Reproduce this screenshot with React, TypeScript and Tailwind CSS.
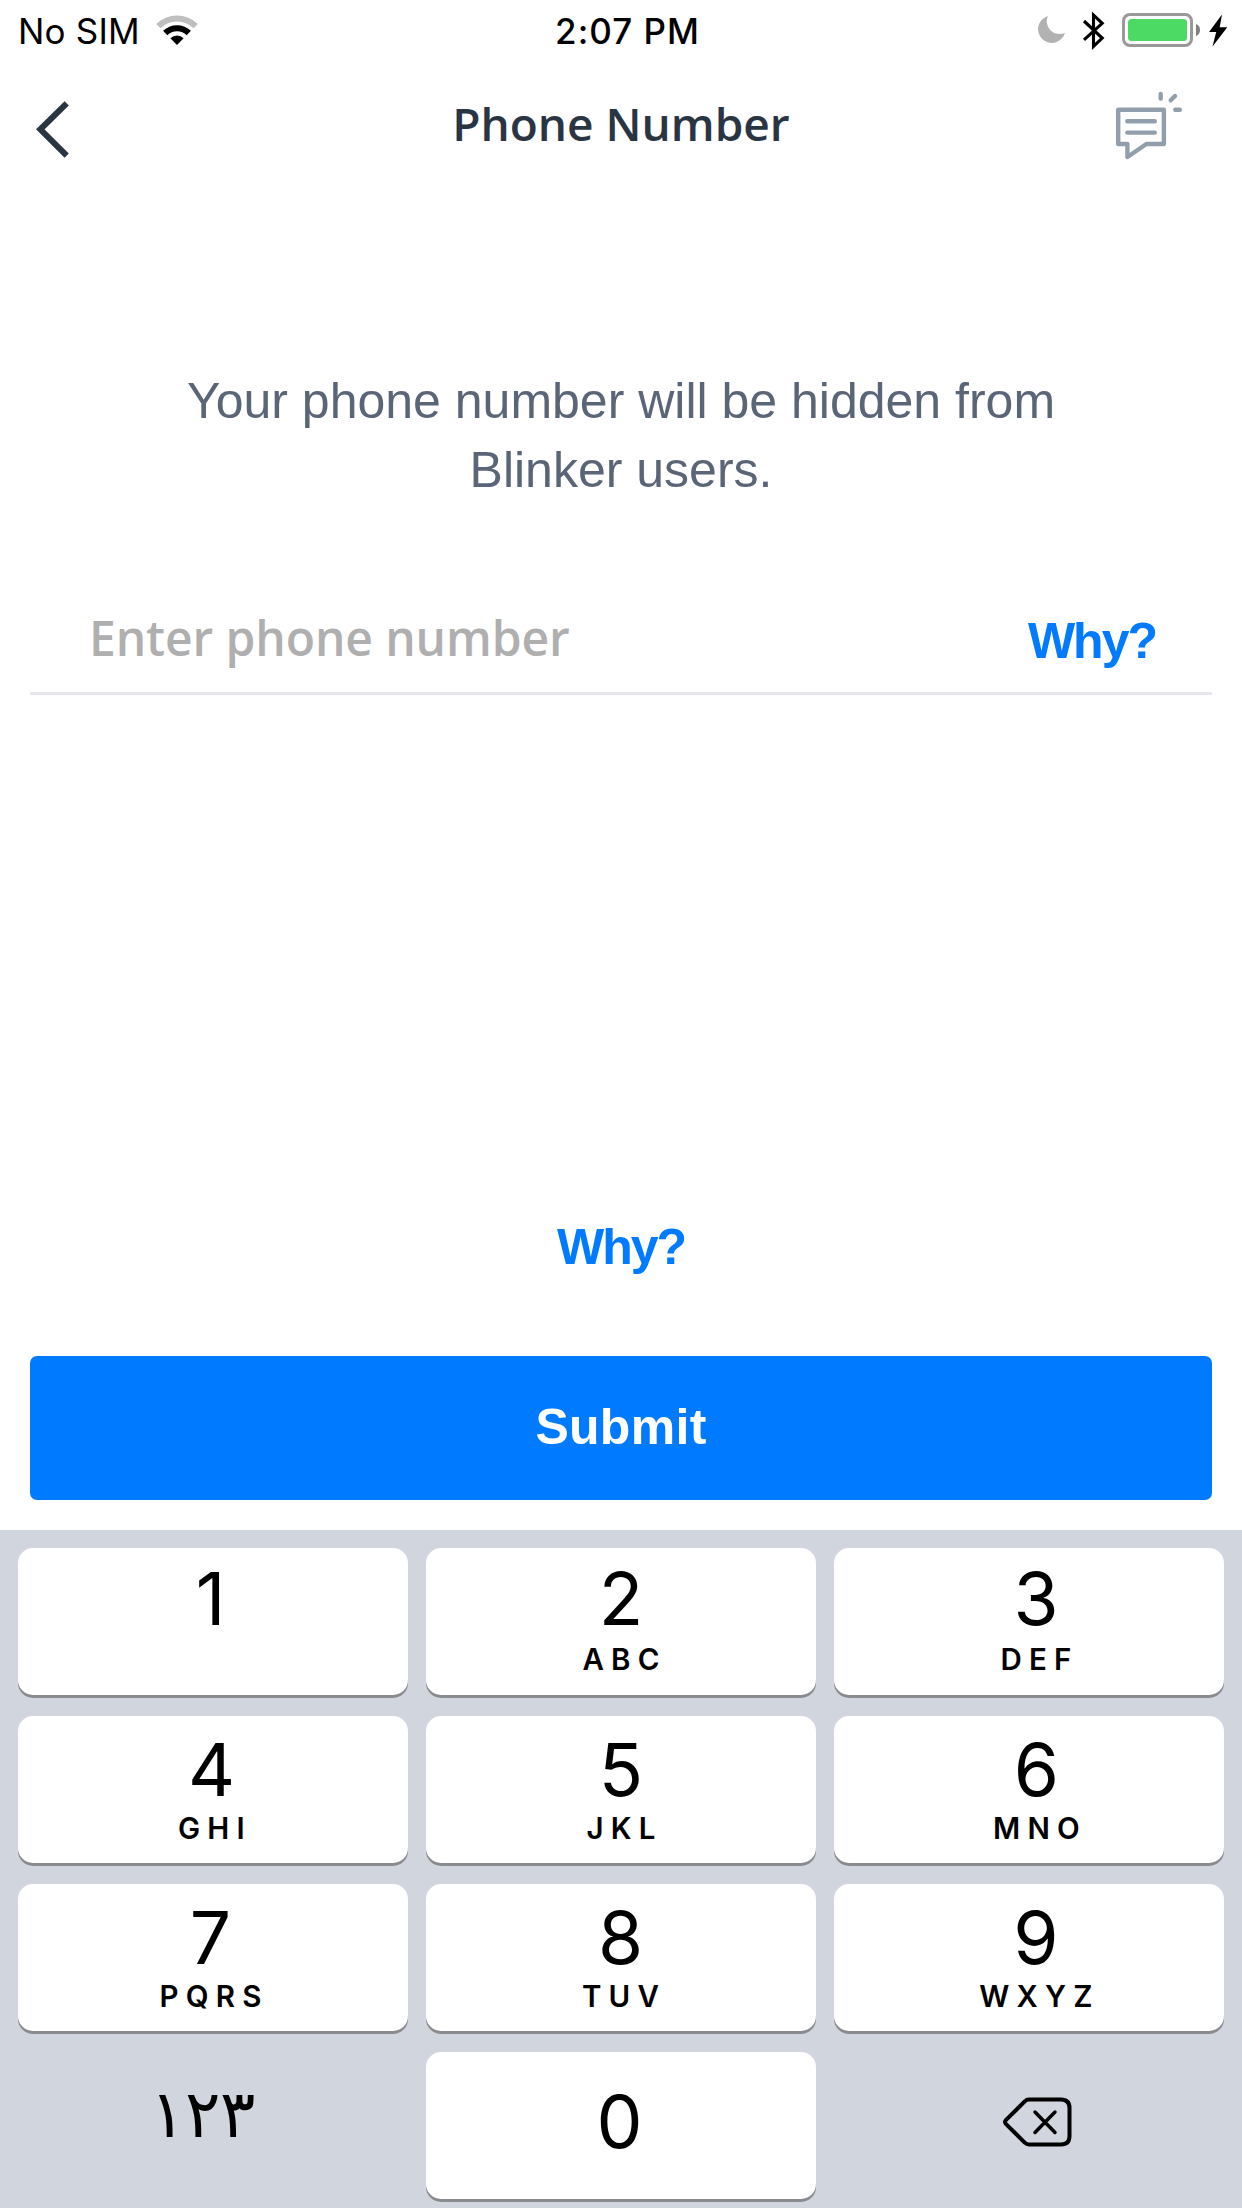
import React from "react";

const KEYS: { digit: string; letters: string; top: string; nudge: string }[] = [
  { digit: "1", letters: "", top: "pt-[11px]", nudge: "pr-[5px]" },
  { digit: "2", letters: "ABC", top: "pt-[11px] gap-[2px]", nudge: "" },
  { digit: "3", letters: "DEF", top: "pt-[11px] gap-[2px]", nudge: "pl-[14px]" },
  { digit: "4", letters: "GHI", top: "pt-[14px]", nudge: "pr-[3px]" },
  { digit: "5", letters: "JKL", top: "pt-[14px]", nudge: "" },
  { digit: "6", letters: "MNO", top: "pt-[14px]", nudge: "pl-[15px]" },
  { digit: "7", letters: "PQRS", top: "pt-[14px]", nudge: "pr-[5px]" },
  { digit: "8", letters: "TUV", top: "pt-[14px]", nudge: "pr-[1px]" },
  { digit: "9", letters: "WXYZ", top: "pt-[14px]", nudge: "pl-[14px]" },
];

const KEY = "h-[147px] rounded-[15px] bg-white shadow-[0_3px_0_#8a8b8f]";

function StatusBar() {
  return (
    <div className="grid h-[60px] grid-cols-3 items-start font-['Inter',sans-serif] text-[35px] leading-[40px] text-black">
      <div className="flex pl-[18px] pt-[11px]">
        <span className="w-[138px] whitespace-nowrap tracking-[0.2px]">No SIM</span>
        <svg className="mt-[4px] h-[31px] w-[42px]" viewBox="0 0 42 31">
          <path d="M2.3 11.2a26.500 26.500 0 0 1 37.400 0" fill="none" stroke="#bfbfbf" strokeWidth="6" />
          <path d="M9.200 18a16.800 16.800 0 0 1 23.600 0" fill="none" stroke="#000" strokeWidth="6" />
          <path d="M21 30l-6.600-6.700a9.400 9.400 0 0 1 13.200 0z" fill="#000" />
        </svg>
      </div>
      <div className="pt-[11px] pl-[13px] text-center font-medium tracking-[1px] whitespace-nowrap">2:07 PM</div>
      <div className="flex justify-end pr-[14px] pt-[11px]">
        <svg className="h-[39px] w-[192px]" viewBox="1036 11 192 39">
          <path d="M1048 16A12.600 12.600 0 0 0 1065 32.700A13.700 13.700 0 1 1 1048 16z" fill="#b2b2b2" />
          <path d="M1084 21l18.200 17-8.700 8.300V15l8.700 8.300L1084 39.800" fill="none" stroke="#000" strokeWidth="3.100" />
          <rect x="1123.500" y="14.500" width="68" height="31" rx="6.500" fill="none" stroke="#999" strokeWidth="3" />
          <rect x="1128" y="19" width="59" height="22" rx="3.500" fill="#4cd964" />
          <path d="M1196 24q4 1.500 4 6t-4 6z" fill="#808080" />
          <path d="M1222 14.500l-13 17.500h7.200l-3.700 14.500 14.800-19.300h-7.600z" fill="#000" />
        </svg>
      </div>
    </div>
  );
}

function Header() {
  return (
    <header className="flex h-[120px] justify-between">
      <button className="ml-[34px] mt-[40px] h-[60px] w-[40px]" aria-label="Back">
        <svg className="h-[60px] w-[40px]" viewBox="34 100 40 60">
          <path d="M66.700 103.300L40.300 129.300l26.400 26.400" fill="none" stroke="#2a3544" strokeWidth="6" />
        </svg>
      </button>
      <h1 className="ml-[56px] mt-[33px] font-['Open_Sans',sans-serif] text-[46px] leading-[60px] font-semibold whitespace-nowrap text-[#2a3544]">
        Phone Number
      </h1>
      <button className="mr-[58px] mt-[28px] h-[72px] w-[72px]" aria-label="Messages">
        <svg className="h-[72px] w-[72px]" viewBox="1112 88 72 72" fill="none" stroke="#919fac" strokeWidth="4.400" strokeLinecap="round" strokeLinejoin="round">
          <path d="M1118.200 109.700h45.700v34.300h-17.500l-19 13v-13h-9.200z" />
          <path d="M1127.300 121.300h27.500M1127.300 132.600h27.500M1160.700 94v4.500M1170.700 100.300l4.300-4.300M1175.300 109.800h4.500" />
        </svg>
      </button>
    </header>
  );
}

export default function App() {
  return (
    <div className="flex h-[2208px] w-[1242px] flex-col overflow-hidden bg-white font-['Liberation_Sans',Arial,sans-serif]">
      <StatusBar />
      <Header />

      <main className="flex h-[1350px] flex-col px-[30px]">
        <p className="mt-[187px] text-center text-[50px] leading-[69px] text-[#5a6678]">
          Your phone number will be hidden from
          <br />
          Blinker users.
        </p>

        <div className="mt-[83px] flex h-[107px] justify-between border-b-[3px] border-[#e6e7ec] pl-[59px] pr-[56px]">
          <span className="mt-[20px] font-['Open_Sans',sans-serif] text-[48px] leading-[60px] font-semibold tracking-[-0.1px] whitespace-nowrap text-[#afafaf]">
            Enter phone number
          </span>
          <button className="mt-[23px] h-[60px] text-[50px] leading-[60px] font-bold tracking-[-2px] text-[#007aff]">Why?</button>
        </div>

        <button className="mt-[522px] self-center text-[50px] leading-[60px] font-bold tracking-[-2px] text-[#007aff]">Why?</button>

        <button className="mt-[79px] h-[144px] rounded-[7px] bg-[#007aff] pb-[2px] text-[50px] leading-[60px] font-bold tracking-[0.3px] text-white">Submit</button>
      </main>

      <section className="grid h-[678px] grid-cols-3 content-start gap-x-[18px] gap-y-[21px] bg-[#d1d5dd] px-[18px] pt-[18px] font-['Inter',sans-serif] text-black">
        {KEYS.map((k) => (
          <button key={k.digit} className={KEY + " flex flex-col items-center " + k.top + " " + k.nudge}>
            <span className="h-[80px] text-[73px] leading-[80px]">{k.digit}</span>
            {k.letters && (
              <span className="h-[36px] pl-[7px] text-[29.500px] leading-[36px] font-semibold tracking-[7.200px]">{k.letters}</span>
            )}
          </button>
        ))}
        <button className="h-[147px] pr-[22px] pb-[22px] font-['DejaVu_Serif',serif] text-[66px] leading-[80px]" aria-label="Arabic digits">
          <bdo dir="ltr">١٢٣</bdo>
        </button>
        <button className={KEY + " pr-[3px] pb-[7px] text-[73px] leading-[80px]"}>0</button>
        <button className="flex h-[147px] items-center justify-center pl-[16px] pb-[7px]" aria-label="Delete">
          <svg className="h-[52px] w-[70px]" viewBox="0 0 70 52" fill="none" stroke="#000" strokeWidth="4" strokeLinecap="round" strokeLinejoin="round">
            <path d="M27 3.500h32q8.500 0 8.500 8.500v28q0 8.500-8.500 8.500H27q-2.500 0-4-1.700L3.800 27.800q-1.500-1.800 0-3.600L23 5.200q1.500-1.700 4-1.700z" />
            <path d="M33 16l20 20.500M53 16l-20 20.500" strokeWidth="3.500" />
          </svg>
        </button>
      </section>
    </div>
  );
}
